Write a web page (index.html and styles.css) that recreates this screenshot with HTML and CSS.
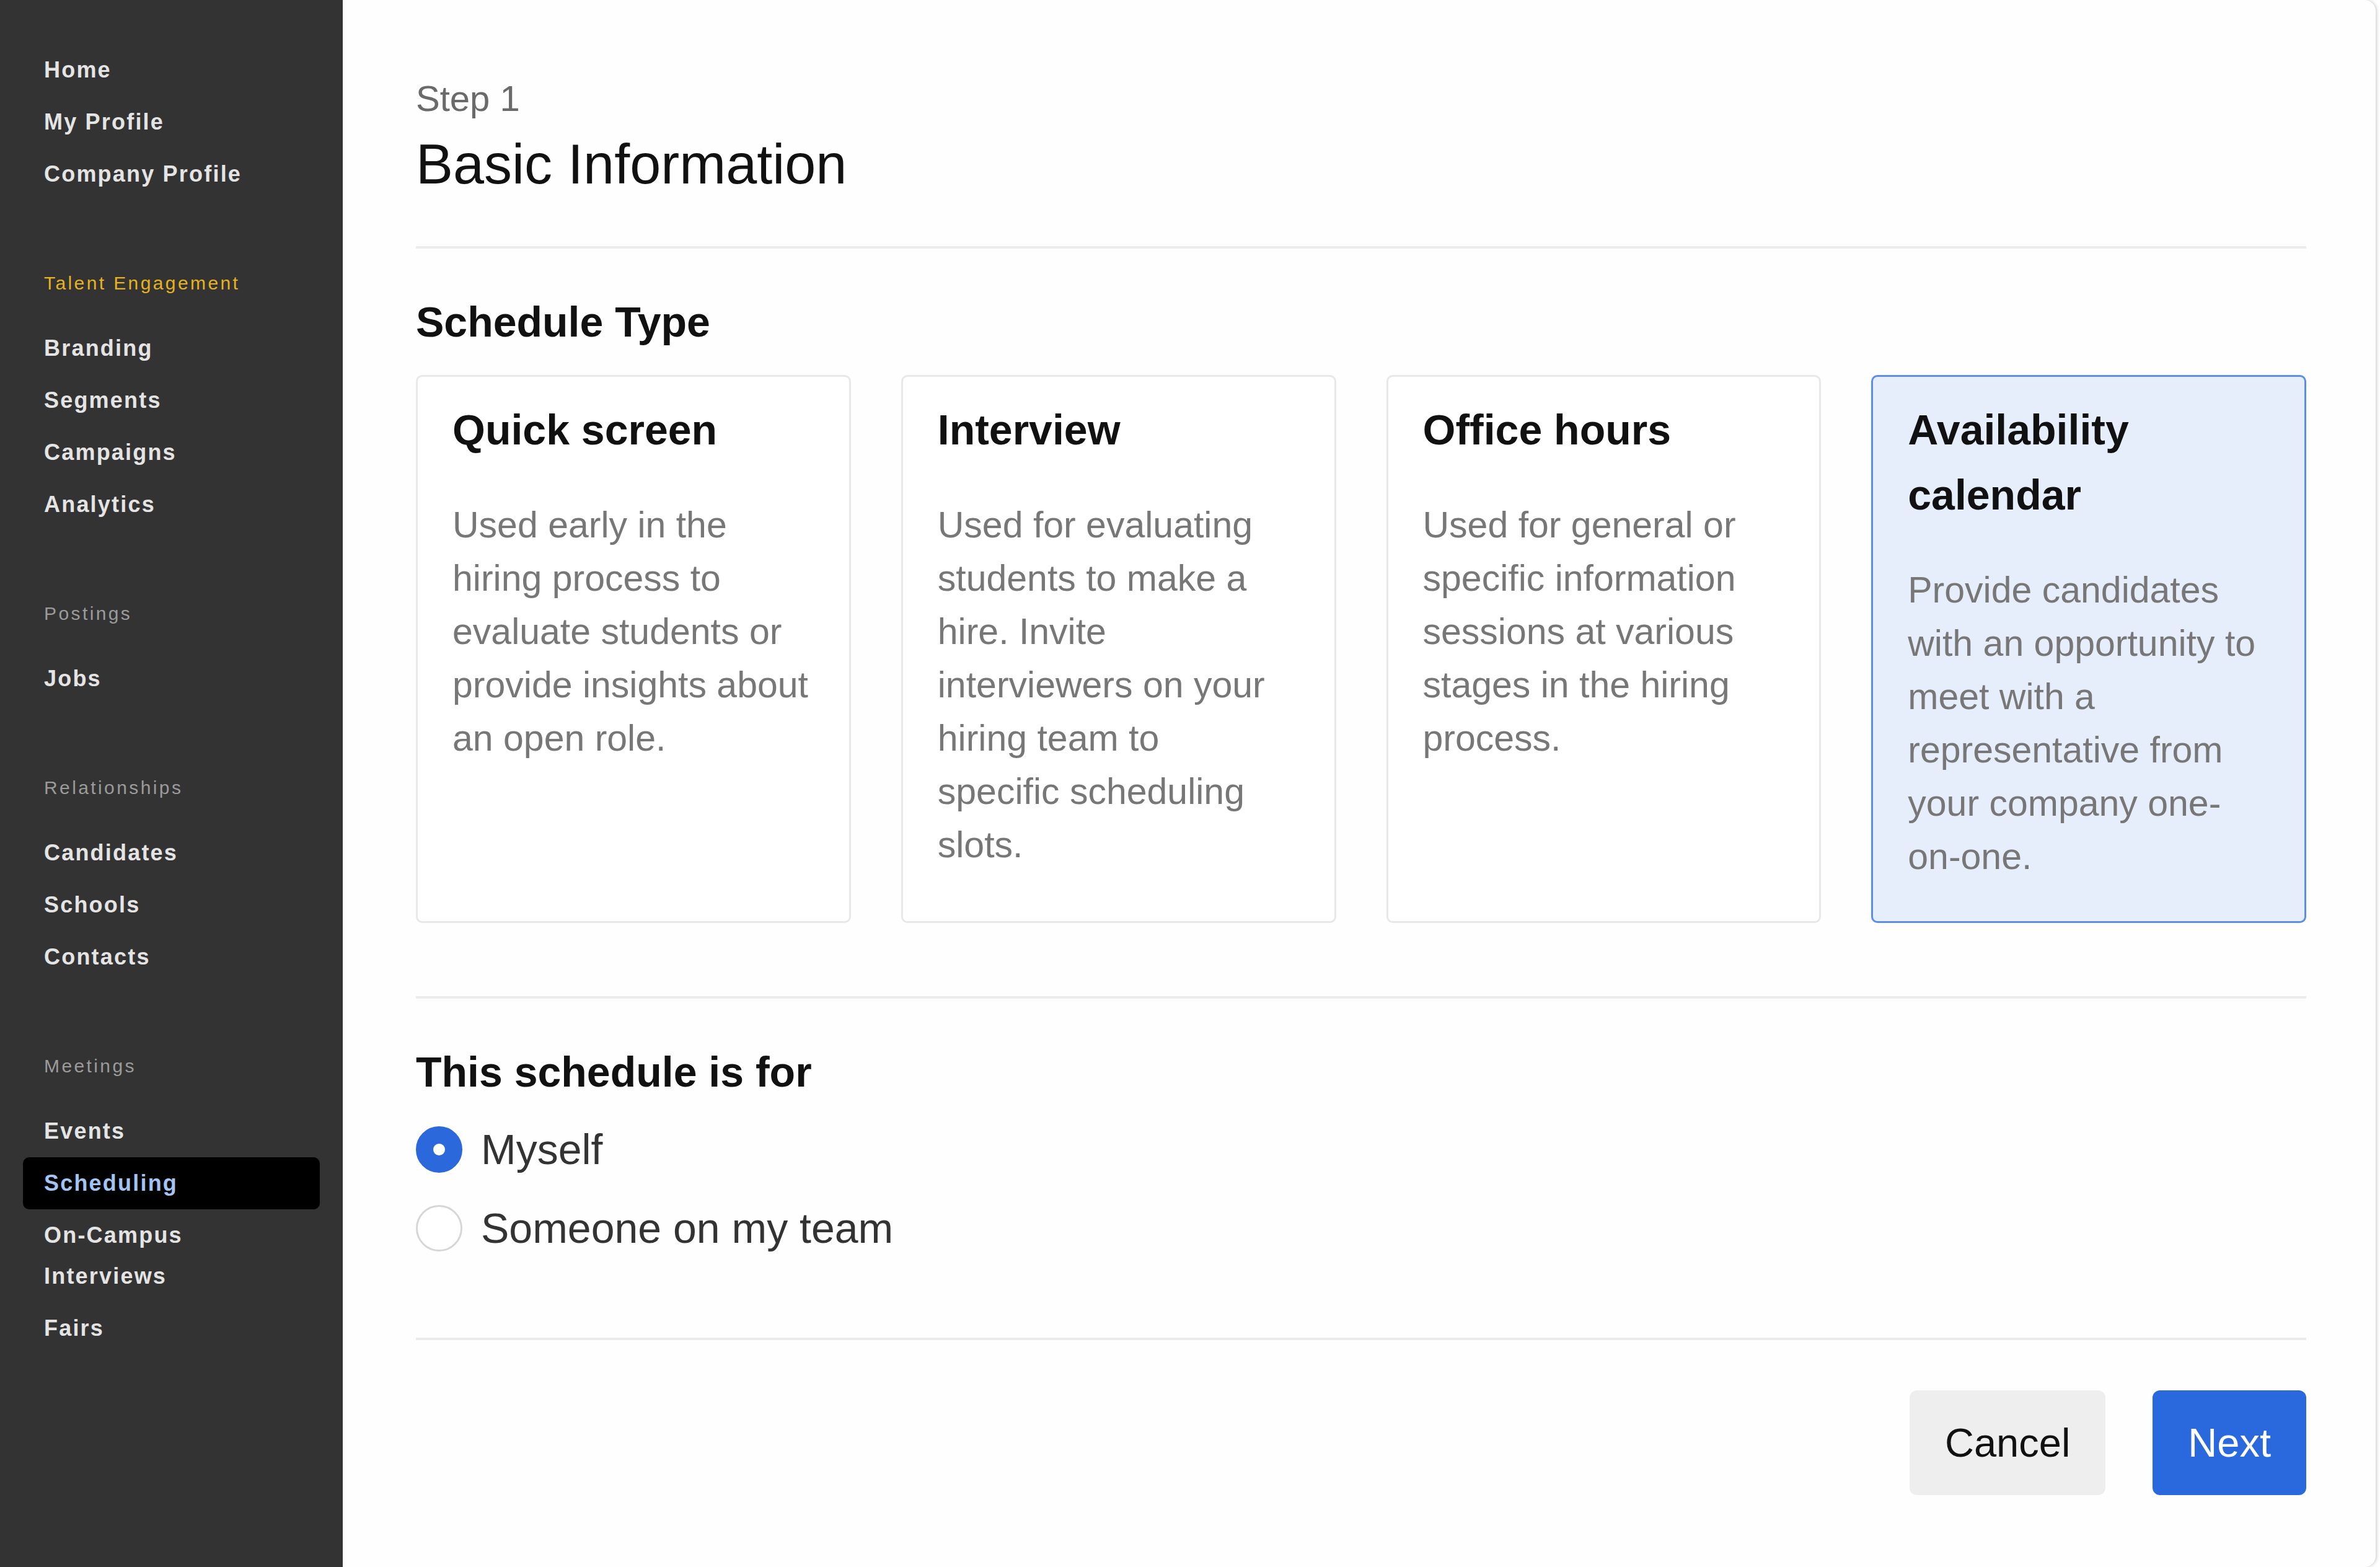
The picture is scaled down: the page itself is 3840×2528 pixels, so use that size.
FILE: index.html
```html
<!DOCTYPE html>
<html lang="en">
<head>
    <meta charset="UTF-8">
    <meta name="viewport" content="width=device-width, initial-scale=1.0">
    <title>Scheduling - Basic Information</title>
    <link rel="stylesheet" href="styles.css">
</head>
<body>
    <nav class="sidebar">
        <ul class="nav-list">
            <li class="nav-item">Home</li>
            <li class="nav-item">My Profile</li>
            <li class="nav-item">Company Profile</li>
        </ul>

        <div class="nav-group">
            <div class="nav-label accent">Talent Engagement</div>
            <ul class="nav-list">
                <li class="nav-item">Branding</li>
                <li class="nav-item">Segments</li>
                <li class="nav-item">Campaigns</li>
                <li class="nav-item">Analytics</li>
            </ul>
        </div>

        <div class="nav-group">
            <div class="nav-label">Postings</div>
            <ul class="nav-list">
                <li class="nav-item">Jobs</li>
            </ul>
        </div>

        <div class="nav-group">
            <div class="nav-label">Relationships</div>
            <ul class="nav-list">
                <li class="nav-item">Candidates</li>
                <li class="nav-item">Schools</li>
                <li class="nav-item">Contacts</li>
            </ul>
        </div>

        <div class="nav-group">
            <div class="nav-label">Meetings</div>
            <ul class="nav-list">
                <li class="nav-item">Events</li>
                <li class="nav-item active">Scheduling</li>
                <li class="nav-item">On-Campus<br>Interviews</li>
                <li class="nav-item">Fairs</li>
            </ul>
        </div>
    </nav>

    <main class="main">
        <div class="step">Step 1</div>
        <h1 class="title">Basic Information</h1>

        <hr class="divider">

        <h2 class="section-title">Schedule Type</h2>
        <div class="cards">
            <div class="card">
                <h3 class="card-title">Quick screen</h3>
                <p class="card-text">Used early in the<br>hiring process to<br>evaluate students or<br>provide insights about<br>an open role.</p>
            </div>
            <div class="card">
                <h3 class="card-title">Interview</h3>
                <p class="card-text">Used for evaluating<br>students to make a<br>hire. Invite<br>interviewers on your<br>hiring team to<br>specific scheduling<br>slots.</p>
            </div>
            <div class="card">
                <h3 class="card-title">Office hours</h3>
                <p class="card-text">Used for general or<br>specific information<br>sessions at various<br>stages in the hiring<br>process.</p>
            </div>
            <div class="card selected">
                <h3 class="card-title">Availability<br>calendar</h3>
                <p class="card-text">Provide candidates<br>with an opportunity to<br>meet with a<br>representative from<br>your company one-<br>on-one.</p>
            </div>
        </div>

        <hr class="divider wide">

        <h2 class="section-title">This schedule is for</h2>
        <div class="radios">
            <label class="radio-row">
                <span class="radio checked"></span>
                <span class="radio-label">Myself</span>
            </label>
            <label class="radio-row">
                <span class="radio"></span>
                <span class="radio-label">Someone on my team</span>
            </label>
        </div>

        <hr class="divider bottom">

        <div class="actions">
            <button class="btn btn-cancel">Cancel</button>
            <button class="btn btn-next">Next</button>
        </div>
    </main>
</body>
</html>
```

FILE: styles.css
```css
html, body {
    height: 100%;
}

body {
    margin: 0;
    display: flex;
    background: #ffffff;
    font-family: "Liberation Sans", Arial, sans-serif;
    color: #111;
}

/* Sidebar */
.sidebar {
    width: 553px;
    flex-shrink: 0;
    background-color: #333333;
    padding-top: 71px;
    box-sizing: border-box;
}

.nav-list {
    list-style: none;
    margin: 0;
    padding: 0;
}

.nav-item {
    margin: 0 37px;
    padding: 9px 34px;
    font-size: 36px;
    font-weight: bold;
    line-height: 66px;
    letter-spacing: 2.2px;
    color: #e4e4e4;
    border-radius: 10px;
}

.nav-item.active {
    background-color: #000;
    color: #a3c4f2;
}

.nav-group {
    margin-top: 114px;
}

.nav-label {
    padding-left: 71px;
    margin-bottom: 43px;
    font-size: 30px;
    line-height: 40px;
    letter-spacing: 3.4px;
    color: #9b9b9b;
}

.nav-label.accent {
    color: #e6b31e;
}

/* Main panel */
.main {
    flex: 1;
    margin-right: 7px;
    padding: 124px 112px 0 118px;
    background: #fefefe;
    border-radius: 0 18px 18px 0;
    box-shadow: 2px 0 5px rgba(0, 0, 0, 0.18);
}

.step {
    font-size: 58px;
    line-height: 70px;
    color: #6a6a6a;
}

.title {
    margin: 16px 0 0;
    font-size: 90px;
    line-height: 110px;
    font-weight: normal;
    color: #111;
}

.divider {
    border: none;
    height: 4px;
    background-color: #ececec;
    margin: 77px 0 0;
}

.divider.wide {
    margin-top: 118px;
}

.divider.bottom {
    margin-top: 127px;
}

.section-title {
    margin: 78px 0 0;
    font-size: 68px;
    line-height: 80px;
    font-weight: bold;
    color: #111;
}

/* Schedule type cards */
.cards {
    display: grid;
    grid-template-columns: repeat(4, 1fr);
    gap: 81px;
    margin-top: 46px;
}

.card {
    border: 3px solid #e8e8e8;
    border-radius: 10px;
    background: #fff;
    padding: 33px 40px 61px 56px;
}

.card.selected {
    background-color: #e6eefc;
    border-color: #5b8ee6;
}

.card-title {
    margin: 0;
    font-size: 68px;
    line-height: 105px;
    font-weight: bold;
    color: #111;
}

.card-text {
    margin: 58px 0 0;
    font-size: 59px;
    line-height: 86px;
    color: #777;
}

/* Radios */
.radios {
    display: flex;
    flex-direction: column;
    gap: 27px;
    margin-top: 35px;
}

.radio-row {
    display: flex;
    align-items: center;
    gap: 30px;
    height: 100px;
}

.radio {
    width: 75px;
    height: 75px;
    box-sizing: border-box;
    border-radius: 50%;
    border: 3px solid #d6d6d6;
    background: #fff;
}

.radio.checked {
    border: 28px solid #2a68dc;
}

.radio-label {
    font-size: 68px;
    color: #333;
}

/* Buttons */
.actions {
    display: flex;
    justify-content: flex-end;
    gap: 76px;
    margin-top: 81px;
}

.btn {
    height: 169px;
    padding: 0 57px;
    border: none;
    border-radius: 12px;
    font-family: "Liberation Sans", Arial, sans-serif;
    font-size: 65px;
    cursor: pointer;
}

.btn-cancel {
    background-color: #eeeeee;
    color: #111;
}

.btn-next {
    background-color: #2968dd;
    color: #fff;
}
```
